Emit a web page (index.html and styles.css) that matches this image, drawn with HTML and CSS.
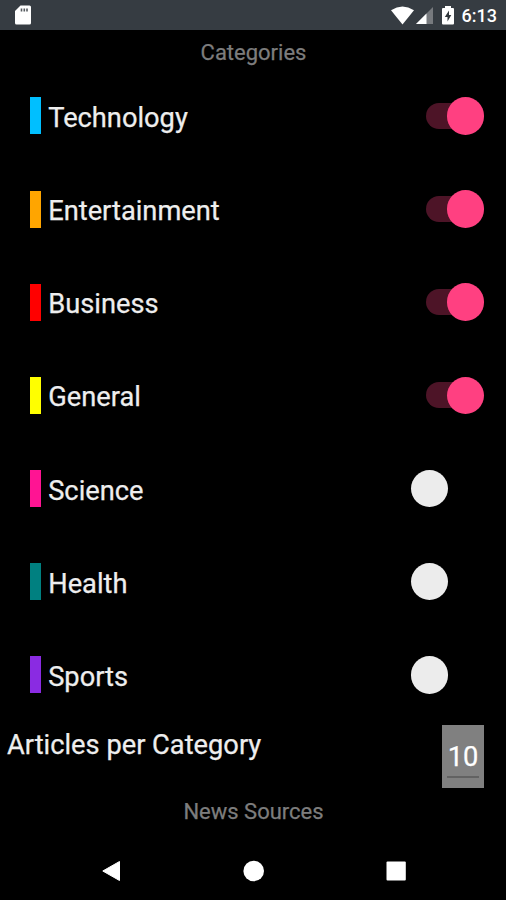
FILE: index.html
```html
<!DOCTYPE html>
<html lang="en">
  <head>
    <title>News Settings</title>
    <meta charset="utf-8">
    <link rel="stylesheet" href="styles.css">
  </head>
  <body>
  <div id="status">
    <svg class="sd" width="18" height="20" viewBox="0 0 18 20">
      <path fill="#fff" d="M6.5 .5H15.5Q17 .5 17 2V18Q17 19.5 15.5 19.5H2.5Q1 19.5 1 18V6Z"/>
      <path stroke="#555a5f" stroke-width="1.6" d="M7.5 3.500V6.500M10.3 3.500V6.500M13 3.500V6.500"/>
    </svg>
    <svg class="signal" width="65" height="20" viewBox="0 0 65 20">
      <path fill="#fff" d="M0 4.2Q11.500 -3.200 23 4.200L11.500 18.500Z"/>
      <path fill="#777a7e" d="M42 1V18H25Z"/>
      <path fill="#fff" d="M35.500 7.500V18H25Z"/>
      <path fill="#fff" d="M54 0H60V2H62Q63 2 63 3V17.500Q63 18.500 62 18.500H52Q51 18.500 51 17.500V3Q51 2 52 2H54Z"/>
      <path fill="#30363b" d="M58 4.500L53.800 11H56.500V15.500L60.300 9H58Z"/>
    </svg>
    <span class="time">6:13</span>
  </div>

  <h2 class="categories">Categories</h2>

  <div class="row"><i class="bar technology"></i><span>Technology</span><b class="switch on"></b></div>
  <div class="row"><i class="bar entertainment"></i><span>Entertainment</span><b class="switch on"></b></div>
  <div class="row"><i class="bar business"></i><span>Business</span><b class="switch on"></b></div>
  <div class="row"><i class="bar general"></i><span>General</span><b class="switch on"></b></div>
  <div class="row"><i class="bar science"></i><span>Science</span><b class="switch"></b></div>
  <div class="row"><i class="bar health"></i><span>Health</span><b class="switch"></b></div>
  <div class="row"><i class="bar sports"></i><span>Sports</span><b class="switch"></b></div>

  <div id="articles">
    <span>Articles per Category</span>
    <div class="count"><span>10</span></div>
  </div>

  <h2 class="sources">News Sources</h2>

  <div id="nav">
    <svg width="506" height="24" viewBox="0 0 506 24">
      <path fill="#fff" stroke="#fff" stroke-linejoin="round" d="M102.800 12L119.500 2.500V21.500Z"/>
      <circle fill="#fff" cx="253.700" cy="12" r="10.300"/>
      <rect fill="#fff" x="386.500" y="2.500" width="19.300" height="19" rx="1"/>
    </svg>
  </div>
  </body>
</html>
```
FILE: styles.css
```css
html {
  height: 100%;
}
body {
  margin: 0;
  padding: 0;
  background: #000;
  color: #eee;
  font-family: Roboto, sans-serif;
  font-size: 27.25px;
  line-height: 34px;
  height: 100%;
  overflow: hidden;
  -webkit-text-stroke: 0.25px;
}

#status {
  display: flex;
  box-sizing: border-box;
  height: 30px;
  padding: 5px 9px 0 14px;
  background: #363c42;
}

.signal {
  margin: 1px 0 0 auto;
}

.time {
  margin-left: 6px;
  color: #fff;
  font-size: 18px;
  font-weight: 500;
  line-height: 21px;
  -webkit-text-stroke: 0;
}

h2 {
  margin: 0;
  color: #7d7d7d;
  font-size: 22px;
  font-weight: 400;
  line-height: 28px;
  text-align: center;
}

.categories {
  height: 30.400px;
  padding: 9px 0 0 1px;
}

.row {
  display: flex;
  align-items: center;
  height: 93.150px;
  padding: 0 22px 0 30.400px;
}

.row span {
  margin: 4px auto 0 7.300px;
}

.bar {
  width: 10.500px;
  height: 37px;
}

.technology { background: #00bfff; }
.entertainment { background: #ffa500; }
.business { background: #ff0000; }
.general { background: #ffff00; }
.science { background: #ff1493; }
.health { background: #008080; }
.sports { background: #8a2be2; }

.switch {
  display: flex;
  align-items: center;
  width: 73.500px;
}

.switch:after {
  content: "";
  width: 37.500px;
  height: 37.500px;
  border-radius: 50%;
  background: #ececec;
}

.switch.on {
  justify-content: flex-end;
}

.switch.on:before {
  content: "";
  width: 40px;
  height: 26px;
  margin-right: -19px;
  border-radius: 13px;
  background: #4d1427;
}

.switch.on:after {
  background: #ff4081;
}

#articles {
  display: flex;
  justify-content: space-between;
  height: 68px;
  padding: 3.400px 22px 0 7px;
}

#articles > span {
  margin-top: 3.500px;
}

.count {
  box-sizing: border-box;
  width: 42px;
  height: 63.500px;
  padding: 15px 5px 0;
  background: #808080;
  color: #fff;
  text-align: center;
}

.count span {
  display: block;
  height: 36px;
  border-bottom: 2px solid #626262;
}

.sources {
  padding: 5px 0 0 1px;
}

#nav {
  padding-top: 33px;
}

#nav svg {
  display: block;
}
```
